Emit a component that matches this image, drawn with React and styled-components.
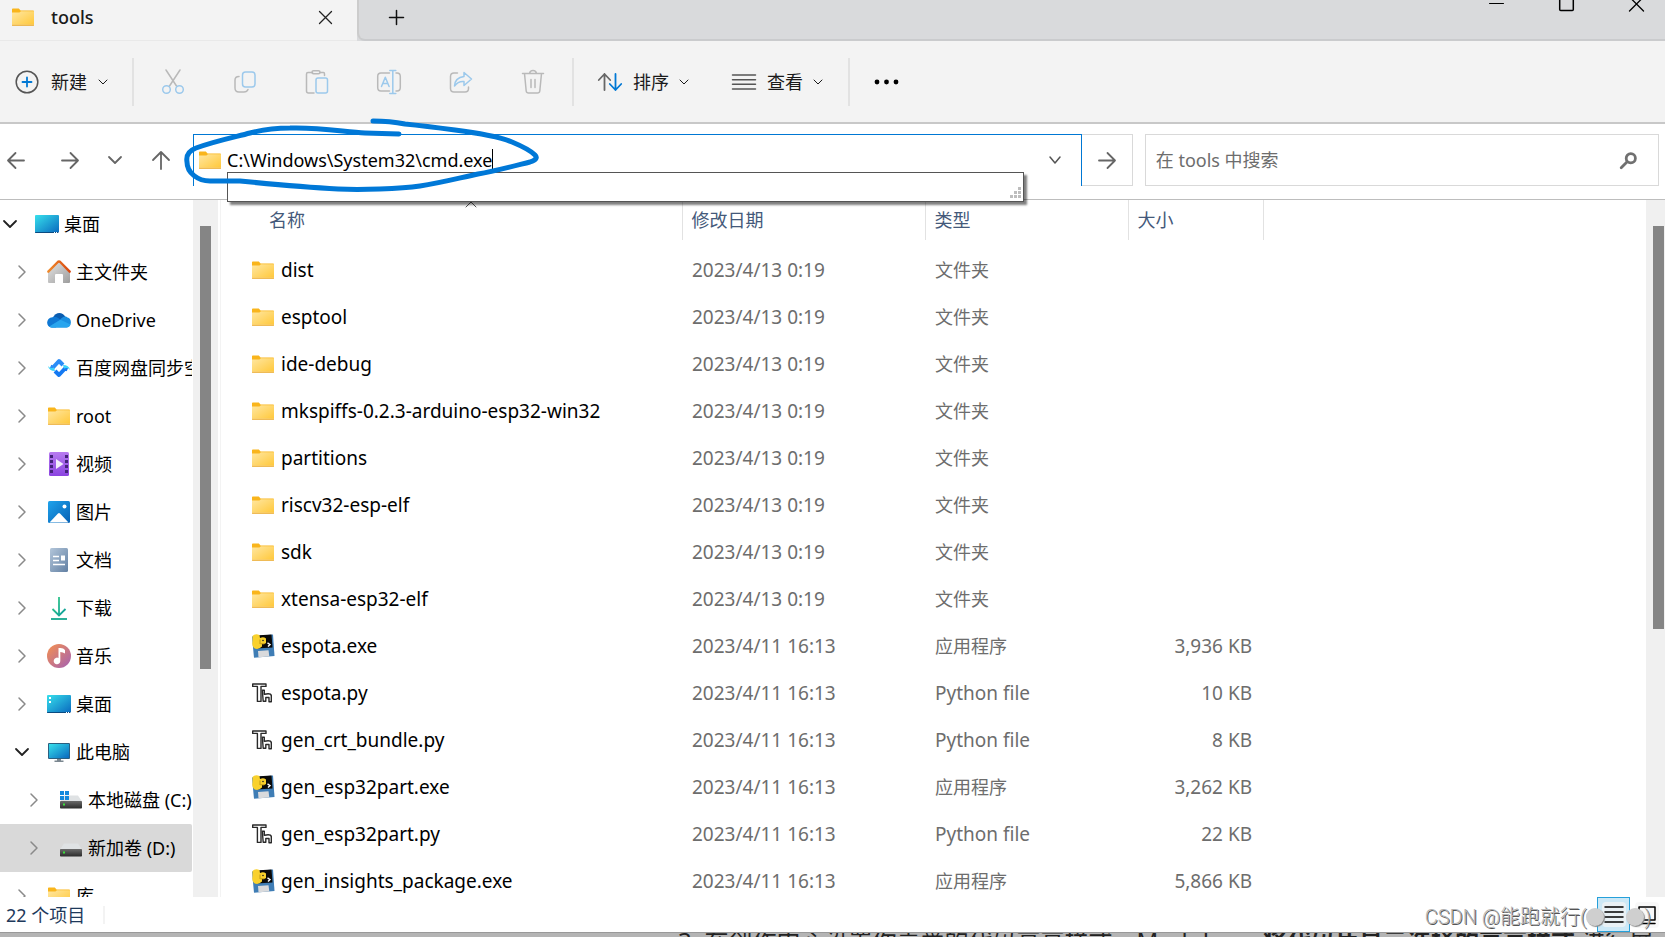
import React from 'react';
import styled, { createGlobalStyle, css } from 'styled-components';

const GlobalStyle = createGlobalStyle`
  * {
    box-sizing: border-box;
  }

  body {
    margin: 0;
    overflow: hidden;
    background: #b4b4b4;
    color: #000;
    font-family: "Noto Sans", "Noto Sans CJK SC", sans-serif;
    font-size: 18px;
    line-height: 24px;
  }

  button,
  input {
    margin: 0;
    padding: 0;
    border: 0;
    background: none;
    color: inherit;
    font: inherit;
    outline: none;
  }

  svg {
    display: block;
    flex: none;
    overflow: visible;
  }
`;

const Page = styled.div`
  display: flex;
  flex-direction: column;
  height: 100vh;
`;

const Window = styled.div`
  flex: 1;
  min-height: 0;
  display: flex;
  flex-direction: column;
  background: #fff;
  border-bottom: 1px solid #999;
`;

/* title bar */

const TitleBar = styled.header`
  display: flex;
  align-items: stretch;
  height: 41px;
  background: #d9dadc;
`;

const Tab = styled.div`
  display: flex;
  align-items: center;
  width: 357px;
  padding: 0 25px 6px 12px;
  background: #f3f3f3;
  border-bottom: 1px solid #e9e9e9;
`;

const TabTitle = styled.span`
  flex: 1;
  margin-left: 17px;
  font-weight: 500;
  color: #1a1a1a;
`;

const TabStrip = styled.div`
  flex: 1;
  display: flex;
  justify-content: space-between;
  align-items: flex-start;
  border-left: 2px solid #ccc;
  border-bottom: 2px solid #cacbcd;
  border-bottom-left-radius: 8px;
`;

const NewTab = styled.button`
  padding: 10px 30px;
`;

const WindowButtons = styled.div`
  display: flex;
  gap: 14px;
  padding-right: 1px;
`;

const WindowButton = styled.button`
  display: flex;
  justify-content: center;
  width: 56px;
`;

/* command bar */

const Toolbar = styled.div`
  display: flex;
  align-items: center;
  height: 83px;
  padding-left: 15px;
  background: #f3f3f3;
  border-bottom: 2px solid #c8c8c8;
`;

const Command = styled.button`
  display: flex;
  align-items: center;
  gap: ${p => p.$gap || 12}px;
  color: #1a1a1a;
`;

const IconCommands = styled.div`
  display: flex;
  gap: 48px;
  margin: 0 27px;
`;

const Divider = styled.span`
  width: 2px;
  height: 48px;
  margin-left: ${p => p.$left || 0}px;
  background: #e2e2e2;
`;

const Commands = styled.div`
  display: flex;
  gap: 44px;
  margin: 0 26px 0 24px;
`;

/* address row */

const AddressRow = styled.div`
  position: relative;
  display: flex;
  align-items: flex-start;
  height: 76px;
  padding: 10px 6px 0 7px;
  border-bottom: 1px solid #bdbdbd;
`;

const NavButtons = styled.div`
  display: flex;
  align-items: center;
  width: 186px;
  height: 52px;
  color: #666;
`;

const NavButton = styled.button`
  display: flex;
  justify-content: center;
  width: ${p => p.$width || 54}px;
  padding-right: ${p => p.$pad || 0}px;
`;

const AddressBox = styled.form`
  position: relative;
  flex: 862;
  display: flex;
  align-items: center;
  height: 52px;
  padding: 0 21px 2px 5px;
  border: 1px solid #0078d4;
  border-bottom: 0;
`;

const AddressInput = styled.input`
  field-sizing: content;
  margin-left: 6px;
`;

const Caret = styled.span`
  width: 1px;
  height: 22px;
  background: #000;
`;

const DropButton = styled.button`
  margin-left: auto;
  color: #555;
`;

const Suggestions = styled.div`
  position: absolute;
  z-index: 1;
  top: 37px;
  left: 33px;
  right: 57px;
  display: flex;
  justify-content: flex-end;
  align-items: flex-end;
  height: 30px;
  padding: 2px;
  background: #fff;
  border: 1px solid #555;
  box-shadow: 3px 3px 2px rgba(0, 0, 0, 0.5);
`;

const GoButton = styled.button`
  display: flex;
  align-items: center;
  justify-content: center;
  width: 51px;
  height: 52px;
  border: 1px solid #d9d9d9;
  border-left: 0;
  color: #666;
`;

const SearchBox = styled.form`
  flex: 482;
  display: flex;
  align-items: center;
  height: 52px;
  margin-left: 12px;
  padding: 0 21px 0 10px;
  border: 1px solid #d9d9d9;

  input {
    flex: 1;
    min-width: 0;
  }

  input::placeholder {
    color: #6d6d6d;
    opacity: 1;
  }
`;

const PenMark = styled.svg`
  position: absolute;
  z-index: 2;
  top: -6px;
  left: 180px;
  pointer-events: none;
`;

/* body */

const Body = styled.div`
  flex: 1;
  min-height: 0;
  display: flex;
`;

const Tree = styled.ul`
  width: 193px;
  margin: 0;
  padding: 0 1px 0 0;
  overflow: hidden;
  list-style: none;
`;

const TreeItem = styled.button`
  display: flex;
  align-items: center;
  width: 100%;
  height: 48px;
  padding-left: ${p => p.$level * 12}px;
  overflow: hidden;
  white-space: nowrap;
  text-align: left;

  ${p =>
    p.$selected &&
    css`
      background: #d9d9d9;
      border-radius: 0 2px 2px 0;
    `}
`;

const Twisty = styled.span`
  flex: none;
  display: flex;
  justify-content: center;
  width: 20px;
  margin-right: 15px;
  color: ${p => (p.$open ? '#222' : '#8a8a8a')};
`;

const TreeIcon = styled.span`
  flex: none;
  display: flex;
  justify-content: center;
  width: 24px;
  margin-right: 5px;
`;

const ScrollTrack = styled.div`
  flex: none;
  width: ${p => p.$width}px;
  padding: 26px ${p => p.$right}px 0 7px;
  background: #f0f0f0;
`;

const ScrollThumb = styled.div`
  height: ${p => p.$size};
  background: #858585;
`;

const Files = styled.main`
  flex: 1;
  min-width: 0;
  margin-left: 2px;
  overflow: hidden;
  border-left: 1px solid #f3f3f3;
`;

const Table = styled.table`
  width: 100%;
  table-layout: fixed;
  border-collapse: collapse;

  tbody::before {
    content: "";
    display: block;
    height: 6px;
  }
`;

const HeadCell = styled.th`
  position: relative;
  height: 40px;
  padding: 0 0 0 ${p => p.$indent || 9}px;
  border-right: ${p => (p.$last ? 0 : '1px solid #e2e2e2')};
  color: #44597a;
  font-weight: 400;
  text-align: left;
`;

const SortMark = styled.span`
  position: absolute;
  top: 2px;
  left: calc(50% + 15px);
  color: #555;
`;

const Cell = styled.td`
  height: 47px;
  padding: 0 11px 0 10px;
  color: #6d6d6d;
  font-size: ${p => (p.$latin ? 19 : 18)}px;
  text-align: ${p => (p.$right ? 'right' : 'left')};
  white-space: nowrap;
`;

const FileName = styled.div`
  display: flex;
  align-items: center;
  gap: 6px;
  padding-left: 21px;
  color: #000;
`;

const FileIcon = styled.span`
  width: 23px;
`;

/* status bar */

const StatusBar = styled.footer`
  position: relative;
  display: flex;
  align-items: center;
  height: 35px;
  padding: 0 2px 0 6px;
  color: #1e395b;
`;

const StatusDivider = styled.span`
  width: 2px;
  height: 18px;
  margin-left: 18px;
  background: #f3f3f3;
`;

const ViewButtons = styled.div`
  display: flex;
  align-items: center;
  margin-left: auto;
`;

const ViewButton = styled.button`
  display: flex;
  align-items: center;
  justify-content: center;
  width: 33px;
  height: 35px;
  color: #000;
  background: ${p => (p.$active ? '#cce8f6' : 'none')};
  border: ${p => (p.$active ? '1px solid #26a0da' : 0)};

  span {
    padding: 4px 3px;
    border-radius: 4px;
    background: rgba(245, 245, 245, 0.7);
  }
`;

const Watermark = styled.div`
  position: absolute;
  right: 14px;
  top: 8px;
  display: flex;
  align-items: center;
  color: #b4b4b4;
  font-family: Roboto, "Noto Sans CJK SC", sans-serif;
  font-size: 20px;
  font-weight: 300;
  text-shadow: 1px 1px 0 #555;
`;

const Dot = styled.span`
  width: 18px;
  height: 18px;
  margin-right: ${p => p.$gap || 0}px;
  border-radius: 50%;
  background: #cfcfcf;
  box-shadow: 1px 1px 1px #888;
`;

const Behind = styled.div`
  display: flex;
  height: 4px;
  padding-left: 678px;
  overflow: hidden;
  color: #222;
  font-size: 24px;
  white-space: pre;

  p {
    margin: -4px 0 0;
  }
`;

/* icons */

const Gradients = () => (
  <svg width="0" height="0" style={{ position: 'absolute' }} aria-hidden="true">
    <defs>
      <linearGradient id="folder" x1="0" y1="0" x2="1" y2="1">
        <stop offset="0" stopColor="#ffe7a2" />
        <stop offset="1" stopColor="#ffc83a" />
      </linearGradient>
      <linearGradient id="screen" x1="0" y1="0" x2="1" y2="1">
        <stop offset="0" stopColor="#37e0ec" />
        <stop offset="1" stopColor="#0968be" />
      </linearGradient>
      <linearGradient id="roof" x1="0" y1="0" x2="1" y2="0">
        <stop offset="0" stopColor="#f08a2c" />
        <stop offset="1" stopColor="#d8470f" />
      </linearGradient>
      <linearGradient id="wall" x1="0" y1="0" x2="1" y2="1">
        <stop offset="0" stopColor="#e4e4e4" />
        <stop offset="1" stopColor="#9d9d9d" />
      </linearGradient>
      <linearGradient id="film" x1="0" y1="0" x2="0" y2="1">
        <stop offset="0" stopColor="#b77bf0" />
        <stop offset="1" stopColor="#8b44e0" />
      </linearGradient>
      <linearGradient id="photo" x1="0" y1="0" x2="1" y2="1">
        <stop offset="0" stopColor="#1fa3ec" />
        <stop offset="1" stopColor="#0560b4" />
      </linearGradient>
      <linearGradient id="paper" x1="0" y1="0" x2="1" y2="1">
        <stop offset="0" stopColor="#b3c6da" />
        <stop offset="1" stopColor="#6280a3" />
      </linearGradient>
      <linearGradient id="arrow" x1="0" y1="0" x2="1" y2="1">
        <stop offset="0" stopColor="#3bd086" />
        <stop offset="1" stopColor="#0a9b9b" />
      </linearGradient>
      <linearGradient id="disc" x1="0" y1="0" x2="1" y2="1">
        <stop offset="0" stopColor="#f6914e" />
        <stop offset="1" stopColor="#a360b4" />
      </linearGradient>
      <linearGradient id="drive" x1="0" y1="0" x2="0" y2="1">
        <stop offset="0" stopColor="#6a6a6a" />
        <stop offset="1" stopColor="#2b2b2b" />
      </linearGradient>
    </defs>
  </svg>
);

const Line = ({ w, h, width = 1.5, color = 'currentColor', children }) => (
  <svg
    width={w}
    height={h}
    viewBox={`0 0 ${w} ${h}`}
    fill="none"
    stroke={color}
    strokeWidth={width}
    strokeLinecap="round"
    strokeLinejoin="round"
  >
    {children}
  </svg>
);

const Folder = () => (
  <svg width="22" height="18" viewBox="0 0 22 18">
    <path d="M0 1.2Q0 .5.8.5h6L8.6 2.6H21.2q.8 0 .8.8V8H0z" fill="#f9b51c" />
    <path d="M0 4.4h7.4L9 3.2h13v13.6H0z" fill="url(#folder)" />
    <path d="M0 16.8h22v.4q0 .5-.6.5H.6q-.6 0-.6-.5z" fill="#eaa51f" />
  </svg>
);

const Desktop = ({ items }) => (
  <svg width="24" height="18" viewBox="0 0 24 18">
    <rect width="24" height="18" rx="1" fill="url(#screen)" />
    <path d="M0 17h24v.2q0 .8-.8.8H.8Q0 18 0 17.2z" fill="#0b4a80" />
    <path d="M19 17.5h1m1 0h1m1 0h.6" stroke="#fff" strokeWidth="1" />
    {items && <path d="M2 2h2v2H2zM2 6h2v2H2z" fill="#fff" />}
  </svg>
);

const Home = () => (
  <svg width="24" height="24" viewBox="0 0 24 24">
    <path d="M1 11.5 12 2l11 9.5V22q0 1-1 1h-6v-8q0-1-1-1H9q-1 0-1 1v8H2q-1 0-1-1z" fill="url(#wall)" />
    <path d="M1.3 11.7 10.8 2q1.2-1.1 2.4 0l9.5 9.7" fill="none" stroke="url(#roof)" strokeWidth="2.4" strokeLinecap="round" />
  </svg>
);

const OneDrive = () => (
  <svg width="24" height="16" viewBox="0 0 24 16">
    <path d="M6 5.5C8 .5 15-1.5 18.5 5L14 9z" fill="#0a5cb0" />
    <path d="M5 15.5C-1.5 15.5-1.5 5.5 5.5 5.2 9 4 11 6 14 8L9 15.5z" fill="#0f78d4" />
    <path d="M13 8c2-3.5 6-4.5 7.5-2.5 4.5.5 5 9.5-1 10H5q-2 0-3-1z" fill="#1b8fe0" />
    <path d="M2.5 14.5 13.5 7.8 23.5 12.5q-1 3-4 3H5q-1.5 0-2.5-1z" fill="#28a5ee" />
  </svg>
);

const Baidu = () => (
  <svg width="22" height="20" viewBox="0 0 22 20" fill="none" strokeWidth="4">
    <path d="M2.5 8.5 5 9.5 11 3l4 4" stroke="#2b8cf7" strokeLinejoin="round" />
    <path d="M19.5 11.5 17 10.5 11 17l-4-4" stroke="#1479f2" strokeLinejoin="round" />
    <path d="M0 8q2 3 6 1.5L7 13Q1 13 0 8zM22 12q-2-3-6-1.5L15 7q6 0 7 5z" fill="#3cd3fa" />
  </svg>
);

const Video = () => (
  <svg width="20" height="24" viewBox="0 0 20 24">
    <rect width="20" height="24" rx="1.5" fill="url(#film)" />
    <path d="M1 3h3v3H1zM1 8h3v3H1zM1 13h3v3H1zM1 18h3v3H1zM16 3h3v3h-3zM16 8h3v3h-3zM16 13h3v3h-3zM16 18h3v3h-3z" fill="#45237a" />
    <path d="M7 7v10l7.5-5z" fill="#f4eefb" />
  </svg>
);

const Picture = () => (
  <svg width="22" height="22" viewBox="0 0 22 22">
    <rect width="22" height="22" rx="1.5" fill="url(#photo)" />
    <path d="M1.5 21.5 10 12.5q1-1 2 0l8.5 9z" fill="#fff" />
    <circle cx="16.5" cy="5.5" r="2" fill="#fff" />
  </svg>
);

const Document = () => (
  <svg width="18" height="24" viewBox="0 0 18 24">
    <rect width="18" height="24" rx="1.5" fill="url(#paper)" />
    <path d="M3 8.5h6M3 12.5h6M3 16.5h12" stroke="#fff" strokeWidth="1.3" />
    <path d="M11 7.5h4v5h-4z" fill="#fff" />
  </svg>
);

const Download = () => (
  <svg width="16" height="23" viewBox="0 0 16 23" fill="none" strokeWidth="1.8">
    <path d="M8 0v18M1.5 12 8 18.5l6.5-6.5" stroke="url(#arrow)" />
    <path d="M0 22h16" stroke="#15a88d" />
  </svg>
);

const Music = () => (
  <svg width="24" height="24" viewBox="0 0 24 24">
    <circle cx="12" cy="12" r="12" fill="url(#disc)" />
    <path d="M11.5 4h2q3 0 4.5 2v3.5q-2-1.5-4.7-1.5V17a3.3 3.3 0 1 1-1.8-3z" fill="#fff" />
  </svg>
);

const Computer = () => (
  <svg width="22" height="19" viewBox="0 0 22 19">
    <path d="M9 15h4v3H9zM6.5 17.5h9V19h-9z" fill="#7b8790" />
    <rect width="22" height="16" rx="1" fill="#2b5f80" />
    <rect x="1" y="1" width="20" height="14" fill="url(#screen)" />
  </svg>
);

const Drive = ({ system }) => (
  <svg width="22" height="18" viewBox="0 0 22 18">
    <path d="M4 4.5h14l4 6H0z" fill="#dfe2e4" />
    <rect y="10" width="22" height="7.5" rx=".8" fill="url(#drive)" />
    <rect x="3" y="12.5" width="2" height="2" fill="#3be03b" />
    {system && <path d="M0 0h4v4H0zM5 0h4v4H5zM0 5h4v4H0zM5 5h4v4H5z" fill="#1389dd" />}
  </svg>
);

const PythonExe = () => (
  <svg width="23" height="24" viewBox="0 0 23 24">
    <path d="M0 2.5 21 .5 22.5 22 2 23.8z" fill="#3f7db5" />
    <path d="M3 1.5 19.5.5 20.5 13.5 4 14.5z" fill="#0a0a0a" />
    <path d="M6 17l10.5-.8.8 6.2L6.5 23.3z" fill="#d9dadc" />
    <path d="M.5 2Q3.5-1 7.5 1L8 4q3.500-1.500 6 .5V9q-1.500 1.500-4 1v2.500Q6 16.500 2 14-.5 11 .5 8z" fill="#f9d12c" />
    <path d="M8 5.5v4.500M8.500 9.800h4" stroke="#b48a0c" strokeWidth=".8" />
    <circle cx="11" cy="6.500" r=".8" fill="#222" />
    <path d="M15.500 8.800l2.500 1.700-2 2" fill="none" stroke="#fff" strokeWidth="1.4" />
  </svg>
);

// Thonny mark: a tall outlined post beside a chair-like shape
const PythonFile = () => (
  <svg width="20" height="20" viewBox="0 0 20 20" fill="#fff" stroke="#2a2a2a" strokeWidth="1.4" strokeLinejoin="round">
    <path d="M.7 1h13.300v2.400H9v15H5.400v-15H.7z" />
    <path d="M10.300 7.300h2v4q6.300-1.500 7 1.200v6.200h-2.300v-4.200h-3.200v3.800h-2.600z" />
  </svg>
);

const Chevron = ({ w = 8, h = 4, dir = 'down', width }) => {
  const d = {
    down: `M0 0l${w / 2} ${h} ${w / 2} -${h}`,
    up: `M0 ${h}l${w / 2} -${h} ${w / 2} ${h}`,
    right: `M0 0l${w} ${h / 2} -${w} ${h / 2}`,
  };
  return (
    <Line w={w} h={h} width={width}>
      <path d={d[dir]} />
    </Line>
  );
};

const grey = '#b9b9b9';
const blue = '#9cc9ec';

const commands = [
  {
    label: '剪切',
    icon: (
      <Line w={24} h={24} color={blue}>
        <path d="M5 0l10.5 16M19 0 8.5 16" stroke={grey} />
        <circle cx="5.5" cy="19.5" r="3.8" />
        <circle cx="18.5" cy="19.5" r="3.8" />
      </Line>
    ),
  },
  {
    label: '复制',
    icon: (
      <Line w={24} h={24} color={blue}>
        <path d="M6 6.5Q2 6.5 2 10v8q0 4 4 4h5q3 0 4-2.5" stroke={grey} />
        <rect x="9.5" y="2" width="12.5" height="15" rx="3" />
      </Line>
    ),
  },
  {
    label: '粘贴',
    icon: (
      <Line w={24} h={24} color={blue}>
        <path d="M7.5 2.5H3q-1.5 0-1.5 1.5v17q0 2 2 2H9M15 2.5h3.5q1 0 1 1.5v1.5" stroke={grey} />
        <rect x="7" y=".8" width="8" height="3" rx="1.5" stroke={grey} />
        <rect x="11" y="8" width="11.5" height="15" rx="2" />
      </Line>
    ),
  },
  {
    label: '重命名',
    icon: (
      <Line w={24} h={24} color={blue}>
        <path d="M12.5 3H4Q.7 3 .7 6.5v11Q.7 21 4 21h8.5M19 3h1q3.3 0 3.3 3.5v11Q23.3 21 20 21h-1" stroke={grey} />
        <path d="M4.5 16.5 8.3 7.2l3.8 9.3M5.8 13.5h5M15.8.5v23M12.8.5h6M12.8 23.5h6" />
      </Line>
    ),
  },
  {
    label: '共享',
    icon: (
      <Line w={24} h={24} color={blue}>
        <path d="M8.5 3H5Q1.5 3 1.5 6.5v12Q1.5 22 5 22h11q3.5 0 3.5-3.5v-1.5" stroke={grey} />
        <path d="M15 2.5l7.5 6.5L15 15.5v-4q-6-.5-9.5 4.5Q6 7.5 15 6.5z" />
      </Line>
    ),
  },
  {
    label: '删除',
    icon: (
      <Line w={24} h={24} color={grey}>
        <path d="M1.5 3.5h21M3.5 3.5l1.7 17.5q.3 2 2.3 2h9q2 0 2.3-2L20.5 3.5M8.5 3.5Q9 .5 12 .5t3.5 3M10 9.5v8M14 9.5v8" />
      </Line>
    ),
  },
];

const tree = [
  { label: '桌面', icon: <Desktop />, level: 0, open: true },
  { label: '主文件夹', icon: <Home />, level: 1 },
  { label: 'OneDrive', icon: <OneDrive />, level: 1 },
  { label: '百度网盘同步空间', icon: <Baidu />, level: 1 },
  { label: 'root', icon: <Folder />, level: 1 },
  { label: '视频', icon: <Video />, level: 1 },
  { label: '图片', icon: <Picture />, level: 1 },
  { label: '文档', icon: <Document />, level: 1 },
  { label: '下载', icon: <Download />, level: 1 },
  { label: '音乐', icon: <Music />, level: 1 },
  { label: '桌面', icon: <Desktop items />, level: 1 },
  { label: '此电脑', icon: <Computer />, level: 1, open: true },
  { label: '本地磁盘 (C:)', icon: <Drive system />, level: 2 },
  { label: '新加卷 (D:)', icon: <Drive />, level: 2, selected: true },
  { label: '库', icon: <Folder />, level: 1 },
];

const folderDate = '2023/4/13 0:19';
const fileDate = '2023/4/11 16:13';

const files = [
  { name: 'dist', kind: 'folder' },
  { name: 'esptool', kind: 'folder' },
  { name: 'ide-debug', kind: 'folder' },
  { name: 'mkspiffs-0.2.3-arduino-esp32-win32', kind: 'folder' },
  { name: 'partitions', kind: 'folder' },
  { name: 'riscv32-esp-elf', kind: 'folder' },
  { name: 'sdk', kind: 'folder' },
  { name: 'xtensa-esp32-elf', kind: 'folder' },
  { name: 'espota.exe', kind: 'exe', size: '3,936 KB' },
  { name: 'espota.py', kind: 'py', size: '10 KB' },
  { name: 'gen_crt_bundle.py', kind: 'py', size: '8 KB' },
  { name: 'gen_esp32part.exe', kind: 'exe', size: '3,262 KB' },
  { name: 'gen_esp32part.py', kind: 'py', size: '22 KB' },
  { name: 'gen_insights_package.exe', kind: 'exe', size: '5,866 KB' },
];

const kinds = {
  folder: { label: '文件夹', icon: <Folder /> },
  exe: { label: '应用程序', icon: <PythonExe /> },
  py: { label: 'Python file', icon: <PythonFile />, latin: true },
};

const ArrowIcon = ({ back }) => (
  <Line w={18} h={17} width={1.8}>
    <path d={back ? 'M17 8.5H1M8.5 1 1 8.5 8.5 16' : 'M1 8.5h16M9.5 1 17 8.5 9.5 16'} />
  </Line>
);

const Title = () => (
  <TitleBar>
    <Tab>
      <Folder />
      <TabTitle>tools</TabTitle>
      <button type="button" aria-label="关闭标签页">
        <Line w={13} h={13} width={1.3} color="#222">
          <path d="M.5.5l12 12M12.5.5l-12 12" />
        </Line>
      </button>
    </Tab>
    <TabStrip>
      <NewTab type="button" aria-label="新标签页">
        <Line w={15} h={15} color="#111">
          <path d="M7.5.5v14M.5 7.5h14" />
        </Line>
      </NewTab>
      <WindowButtons>
        <WindowButton type="button" aria-label="最小化">
          <Line w={15} h={12} width={1} color="#000">
            <path d="M.5 3.5h14" />
          </Line>
        </WindowButton>
        <WindowButton type="button" aria-label="最大化">
          <Line w={15} h={12} color="#000">
            <path d="M.7-1v10.5q0 1 1 1h11.6q1 0 1-1V-1" />
          </Line>
        </WindowButton>
        <WindowButton type="button" aria-label="关闭">
          <Line w={15} h={12} width={1.3} color="#000">
            <path d="M.5 11l14-14M14.5 11l-14-14" />
          </Line>
        </WindowButton>
      </WindowButtons>
    </TabStrip>
  </TitleBar>
);

const CommandBar = () => (
  <Toolbar>
    <Command type="button">
      <Line w={24} h={24} color="#555">
        <circle cx="12" cy="12" r="10.8" />
        <path d="M12 7.5v9M7.5 12h9" stroke="#0078d4" strokeWidth="1.8" />
      </Line>
      新建
      <Chevron width={1} />
    </Command>
    <Divider $left={25} />
    <IconCommands>
      {commands.map(c => (
        <Command key={c.label} type="button" aria-label={c.label} disabled>
          {c.icon}
        </Command>
      ))}
    </IconCommands>
    <Divider />
    <Commands>
      <Command type="button" $gap={11}>
        <Line w={24} h={18} width={1.8} color="#666">
          <path d="M6.5 17V1M.8 7 6.5 1l5.7 6" />
          <path d="M17.5 1v16M11.8 11l5.7 6 5.7-6" stroke="#0078d4" />
        </Line>
        排序
        <Chevron width={1} />
      </Command>
      <Command type="button" $gap={11}>
        <Line w={24} h={16} color="#555">
          <path d="M.5 1h23M.5 5.7h23M.5 10.3h23M.5 15h23" />
        </Line>
        查看
        <Chevron width={1} />
      </Command>
    </Commands>
    <Divider />
    <IconCommands>
      <Command type="button" aria-label="更多">
        <svg width="24" height="6" viewBox="0 0 24 6">
          <circle cx="0" cy="3" r="2.4" />
          <circle cx="9.5" cy="3" r="2.4" />
          <circle cx="19" cy="3" r="2.4" />
        </svg>
      </Command>
    </IconCommands>
  </Toolbar>
);

const Address = () => (
  <AddressRow>
    <NavButtons>
      <NavButton type="button" aria-label="后退" $width={36} $pad={18}>
        <ArrowIcon back />
      </NavButton>
      <NavButton type="button" aria-label="前进" $width={54}>
        <ArrowIcon />
      </NavButton>
      <NavButton type="button" aria-label="最近浏览的位置" $width={36}>
        <Chevron w={12} h={6} width={1.8} />
      </NavButton>
      <NavButton type="button" aria-label="向上" $width={56}>
        <Line w={18} h={19} width={1.8}>
          <path d="M9 18V1M1 9l8-8 8 8" />
        </Line>
      </NavButton>
    </NavButtons>
    <AddressBox>
      <Folder />
      <AddressInput type="text" aria-label="地址" defaultValue="C:\Windows\System32\cmd.exe" />
      <Caret />
      <DropButton type="button" aria-label="以前的位置">
        <Chevron w={10} h={6} />
      </DropButton>
      <Suggestions>
        <svg width="12" height="12" viewBox="0 0 12 12" fill="#bdbdbd">
          <path d="M9 0h3v3H9zM9 4h3v3H9zM9 8h3v3H9zM5 4h3v3H5zM5 8h3v3H5zM1 8h3v3H1z" />
        </svg>
      </Suggestions>
    </AddressBox>
    <GoButton type="button" aria-label="转到">
      <ArrowIcon />
    </GoButton>
    <SearchBox>
      <input type="text" aria-label="搜索" placeholder="在 tools 中搜索" />
      <button type="button" aria-label="开始搜索">
        <Line w={17} h={17} width={2.8} color="#707070">
          <circle cx="10.8" cy="6.2" r="4.6" />
          <path d="M7.2 9.8 1.2 15.8" />
        </Line>
      </button>
    </SearchBox>
    <PenMark
      width="365"
      height="80"
      viewBox="180 118 365 80"
      fill="none"
      stroke="#0078d7"
      strokeWidth="5"
      strokeLinecap="round"
      strokeLinejoin="round"
    >
      <path d="M373 121C386 121 395 122 405 124 425 126 440 128 455 130 478 133 500 137 512 142 524 147 532 152 535 155Q539 159 530 162C510 167 495 171 478 174 455 179 440 183 420 186 400 189 360 190 338 189 300 187 270 184 240 181H210C198 181 187 173 187 162 186 156 188 151 196 148 215 141 235 137 250 133 265 129 275 128 290 128 320 127 345 132 365 133L399 134" />
    </PenMark>
  </AddressRow>
);

const Sidebar = () => (
  <Tree>
    {tree.map((item, i) => (
      <li key={i}>
        <TreeItem type="button" $level={item.level} $selected={item.selected}>
          <Twisty $open={item.open}>
            {item.open ? <Chevron w={12} h={6} width={1.8} /> : <Chevron w={6} h={12} dir="right" />}
          </Twisty>
          <TreeIcon>{item.icon}</TreeIcon>
          {item.label}
        </TreeItem>
      </li>
    ))}
  </Tree>
);

const FileTable = () => (
  <Files>
    <Table>
      <colgroup>
        <col width="461" />
        <col width="243" />
        <col width="203" />
        <col width="135" />
        <col />
      </colgroup>
      <thead>
        <tr>
          <HeadCell $indent={48}>
            名称
            <SortMark>
              <Chevron w={10} h={5} dir="up" width={1} />
            </SortMark>
          </HeadCell>
          <HeadCell>修改日期</HeadCell>
          <HeadCell>类型</HeadCell>
          <HeadCell>大小</HeadCell>
          <HeadCell as="td" $last />
        </tr>
      </thead>
      <tbody>
        {files.map(({ name, kind, size }) => (
          <tr key={name}>
            <Cell $latin>
              <FileName>
                <FileIcon>{kinds[kind].icon}</FileIcon>
                {name}
              </FileName>
            </Cell>
            <Cell $latin>{kind === 'folder' ? folderDate : fileDate}</Cell>
            <Cell $latin={kinds[kind].latin}>{kinds[kind].label}</Cell>
            <Cell $latin $right>
              {size}
            </Cell>
            <Cell />
          </tr>
        ))}
      </tbody>
    </Table>
  </Files>
);

const Status = () => (
  <StatusBar>
    22 个项目
    <StatusDivider />
    <ViewButtons>
      <ViewButton type="button" aria-label="详细信息" $active>
        <span>
          <Line w={18} h={17} color="#000">
            <path d="M0 1h18M0 6h18M0 11h18M0 16h18" />
          </Line>
        </span>
      </ViewButton>
      <ViewButton type="button" aria-label="大图标">
        <span>
          <Line w={18} h={18} color="#000">
            <path d="M1 1h16v13H1zM1 17.5h16" />
          </Line>
        </span>
      </ViewButton>
    </ViewButtons>
    <Watermark>
      CSDN @能跑就行(
      <Dot $gap={22} />
      <Dot />)
    </Watermark>
  </StatusBar>
);

const App = () => (
  <Page>
    <GlobalStyle />
    <Gradients />
    <Window>
      <Title />
      <CommandBar />
      <Address />
      <Body>
        <Sidebar />
        <ScrollTrack $width={25} $right={7}>
          <ScrollThumb $size="66%" />
        </ScrollTrack>
        <FileTable />
        <ScrollTrack $width={19} $right={1}>
          <ScrollThumb $size="60%" />
        </ScrollTrack>
      </Body>
      <Status />
    </Window>
    <Behind>
      <p>
        3. 在创作中心设置你喜爱的代码高亮样式，Markdown <b>将代码片显示选择的高亮样式</b> 进行展示
      </p>
    </Behind>
  </Page>
);

export default App;
